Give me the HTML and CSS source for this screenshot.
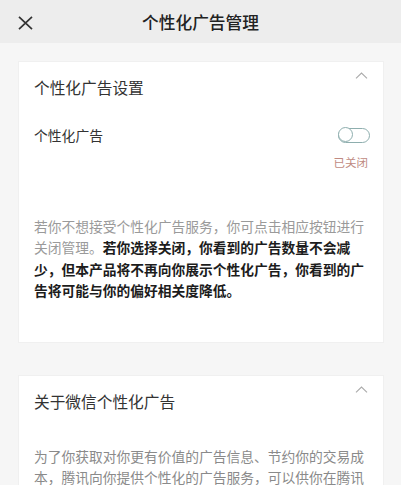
FILE: index.html
```html
<!DOCTYPE html>
<html lang="zh-CN">
<head>
    <meta charset="UTF-8">
    <meta name="viewport" content="width=device-width, initial-scale=1.0">
    <title>个性化广告管理</title>
    <link rel="stylesheet" href="styles.css">
</head>
<body>

    <!-- Barra superior -->
    <header class="top-bar">
        <svg class="close-icon" width="15" height="14" viewBox="0 0 15 14">
            <path d="M1 0.8 L14 13.2 M14 0.8 L1 13.2" stroke="#333" stroke-width="1.7" fill="none"/>
        </svg>
        <h1 class="top-title">个性化广告管理</h1>
    </header>

    <main class="page">
        <section class="card">
            <div class="card-head">
                <h2 class="card-title">个性化广告设置</h2>
                <svg class="chevron" width="13" height="7" viewBox="0 0 13 7">
                    <path d="M1 6.3 L6.5 1 L12 6.3" stroke="#aaa" stroke-width="1.1" fill="none"/>
                </svg>
            </div>

            <div class="setting-row">
                <span class="setting-label">个性化广告</span>
                <span class="switch"><span class="switch-knob"></span></span>
            </div>
            <div class="status">已关闭</div>

            <p class="desc">若你不想接受个性化广告服务，你可点击相应按钮进行关闭管理。<strong>若你选择关闭，你看到的广告数量不会减少，但本产品将不再向你展示个性化广告，你看到的广告将可能与你的偏好相关度降低。</strong></p>
        </section>

        <section class="card">
            <div class="card-head">
                <h2 class="card-title">关于微信个性化广告</h2>
                <svg class="chevron" width="13" height="7" viewBox="0 0 13 7">
                    <path d="M1 6.3 L6.5 1 L12 6.3" stroke="#aaa" stroke-width="1.1" fill="none"/>
                </svg>
            </div>

            <p class="desc desc-about">为了你获取对你更有价值的广告信息、节约你的交易成本，腾讯向你提供个性化的广告服务，可以供你在腾讯及合作伙伴的平台上看到与你更相关的广告内容，提升你的使用体验。</p>
        </section>
    </main>

</body>
</html>
```

FILE: styles.css
```css
/* Estilos generales */
* {
    box-sizing: border-box;
}

body {
    margin: 0;
    font-family: 'Noto Sans CJK SC', 'Noto Sans', sans-serif;
    background-color: #f6f6f6;
    color: #333;
    overflow: hidden;
}

/* Barra superior */
.top-bar {
    position: relative;
    height: 43px;
    background: #ededed;
    display: flex;
    align-items: center;
    justify-content: center;
}

.close-icon {
    position: absolute;
    left: 18px;
    top: 16px;
}

.top-title {
    margin: 0;
    font-size: 16.7px;
    font-weight: 500;
    color: #222;
    line-height: 20px;
}

.page {
    padding: 18px 17px 0 18px;
    display: flex;
    flex-direction: column;
    gap: 32px;
}

/* Tarjetas */
.card {
    background: #fff;
    border: 1px solid #f0f0f0;
    padding: 16px 15px 41px 15px;
}

.card-head {
    display: flex;
    justify-content: space-between;
    align-items: flex-start;
}

.card-title {
    margin: 0;
    font-size: 15.7px;
    font-weight: normal;
    line-height: 20px;
    color: #333;
}

.chevron {
    margin-top: -6px;
    margin-right: 0;
}

.setting-row {
    display: flex;
    justify-content: space-between;
    align-items: center;
    margin-top: 27px;
    height: 20px;
}

.setting-label {
    font-size: 13.8px;
    color: #333;
}

/* Interruptor apagado */
.switch {
    display: block;
    width: 32px;
    height: 15px;
    border: 1.3px solid #8eaeae;
    border-radius: 8px;
    position: relative;
    margin-right: -2px;
}

.switch-knob {
    position: absolute;
    left: -1.3px;
    top: -1.3px;
    width: 15px;
    height: 15px;
    border: 1.3px solid #8eaeae;
    border-radius: 50%;
    background: #fff;
}

.status {
    text-align: right;
    font-size: 11.5px;
    line-height: 16px;
    color: #c08a82;
    margin-top: 9px;
}

.desc {
    margin: 46px 0 0 0;
    font-size: 13.75px;
    line-height: 21.3px;
    color: #9a9a9a;
}

.desc strong {
    color: #1c1c1c;
    font-weight: bold;
}

.desc-about {
    margin-top: 34px;
    color: #8a8a8a;
}
```
